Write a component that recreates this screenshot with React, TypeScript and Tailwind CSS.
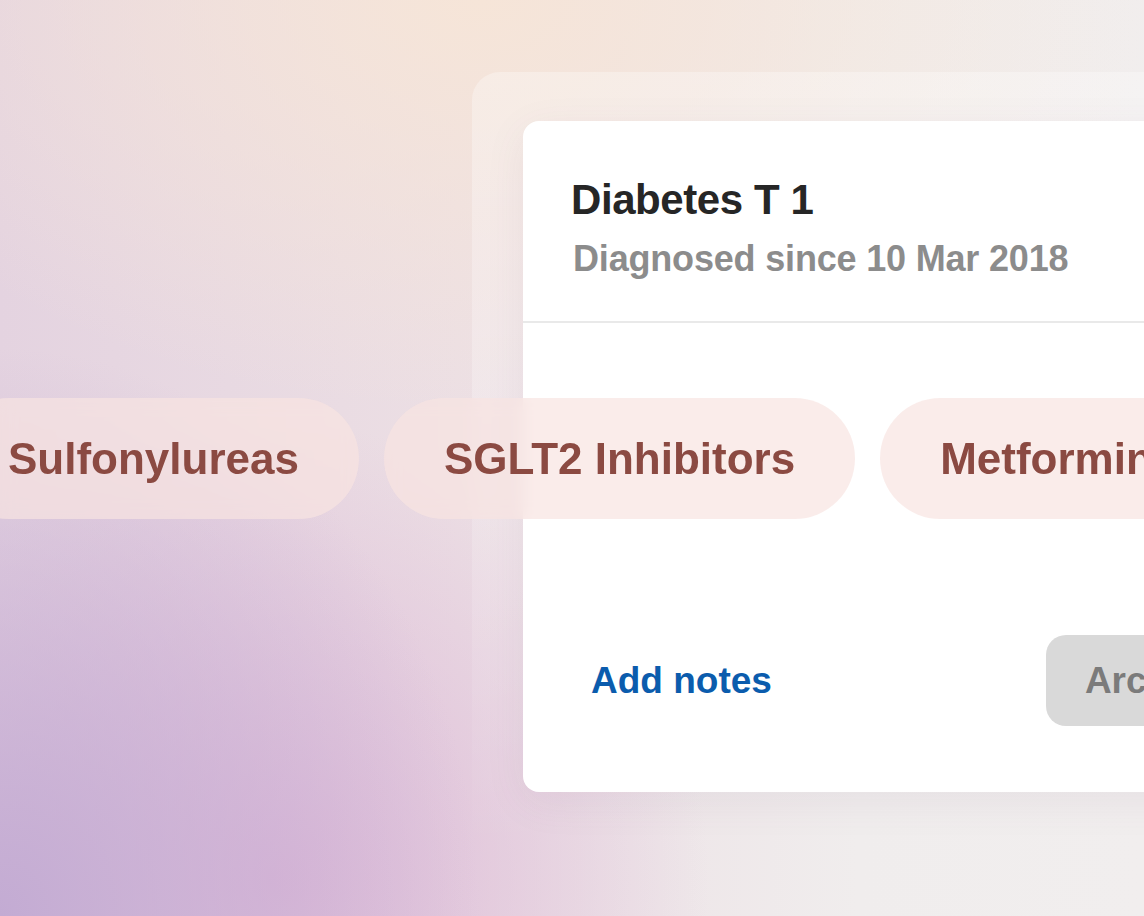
const pills = ["Sulfonylureas", "SGLT2 Inhibitors", "Metformin"];

const App = () => {
  return (
    <div
      className="relative w-[1144px] h-[916px] overflow-hidden font-['Liberation_Sans',Arial,sans-serif] bg-[#efeced] bg-[image:radial-gradient(ellipse_42%_62%_at_0%_100%,#c3abd3_0%,rgba(195,171,211,0)_100%),radial-gradient(ellipse_38%_50%_at_24%_96%,#dcb8d7_0%,rgba(220,184,215,0)_100%),radial-gradient(ellipse_60%_45%_at_42%_0%,#f6e5d8_0%,rgba(246,229,216,0)_100%),linear-gradient(to_right,#e4d3e0_0%,#ecdfe4_40%,#f0eded_75%,#f1eeee_100%)]"
    >
      {/* frosted frame + card */}
      <div className="pl-[472px] pt-[72px]">
        <div className="w-[900px] rounded-[28px] bg-gradient-to-b from-white/30 via-white/20 to-white/0 pl-[51px] pt-[49px] pb-[60px]">
          <div className="w-[849px] rounded-l-[16px] bg-white shadow-[0_10px_40px_rgba(120,80,110,0.08)]">
            <div className="pl-12 pt-[55px] pb-[41px]">
              <h1 className="text-[42px] leading-[48px] font-bold text-[#262626] tracking-[-0.01em]">
                Diabetes T 1
              </h1>
              <p className="mt-[14px] pl-[2px] text-[36px] leading-[42px] font-bold text-[#8c8c8c] tracking-[-0.005em]">
                Diagnosed since 10 Mar 2018
              </p>
            </div>
            <div className="h-[2px] bg-[#e9e9e9]" />
            <div className="h-[312px]" />
            <div className="flex items-center pl-[68px] pb-[66px]">
              <span className="shrink-0 whitespace-nowrap text-[37px] leading-[62px] font-bold text-[#0b5cad]">
                Add notes
              </span>
              <div className="shrink-0 ml-[274px] h-[91px] rounded-[20px] bg-[#d9d9d9] pl-[39px] pr-10 flex items-center">
                <span className="whitespace-nowrap text-[37px] font-bold text-[#7b7b7b]">Archive</span>
              </div>
            </div>
          </div>
        </div>
      </div>

      {/* medication pills lying over the card */}
      <div className="absolute top-[398px] left-[-52px] flex gap-[25px]">
        {pills.map((p) => (
          <div
            key={p}
            className="h-[121px] shrink-0 rounded-full bg-[#f8e4e1]/70 backdrop-blur-sm px-[60px] flex items-center"
          >
            <span className="text-[44px] font-bold text-[#8b4a42] whitespace-nowrap">{p}</span>
          </div>
        ))}
      </div>
    </div>
  );
};

export default App;
